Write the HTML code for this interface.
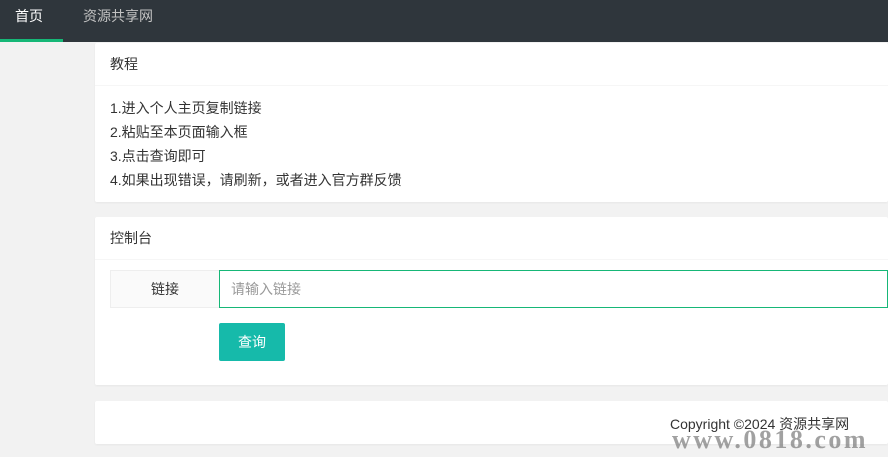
<!DOCTYPE html><html><head><meta charset="utf-8"><style>
*{margin:0;padding:0;box-sizing:border-box}
body{width:888px;height:457px;overflow:hidden;background:#f2f2f2;font-family:"Liberation Sans","Noto Sans CJK SC",sans-serif;font-size:14px;color:#333;position:relative}
.hd{position:absolute;left:0;top:0;width:888px;height:42px;background:#2f363c}
.hd .a{position:absolute;top:6px;font-size:14px}
.ul{position:absolute;left:0;top:39px;width:63px;height:3px;background:#16b777}
.card{position:absolute;left:95px;width:793px;background:#fff;border-radius:2px;box-shadow:0 1px 2px rgba(0,0,0,.05)}
.ch{height:43px;line-height:43px;padding-left:15px;border-bottom:1px solid #f6f6f6;color:#333}
.ln{position:absolute;left:15px;line-height:20px}
</style></head><body>
<div class="hd"><span class="a" style="left:15px;color:#fff">首页</span><span class="a" style="left:83px;color:#c2c2c2">资源共享网</span><div class="ul"></div></div>
<div class="card" style="top:43px;height:159px"><div class="ch">教程</div>
<div class="ln" style="top:55px">1.进入个人主页复制链接</div>
<div class="ln" style="top:79px">2.粘贴至本页面输入框</div>
<div class="ln" style="top:103px">3.点击查询即可</div>
<div class="ln" style="top:127px">4.如果出现错误，请刷新，或者进入官方群反馈</div>
</div>
<div class="card" style="top:217px;height:168px"><div class="ch">控制台</div>
<div style="position:absolute;left:15px;top:53px;width:110px;height:38px;border:1px solid #eee;background:#fafafa;line-height:36px;text-align:center">链接</div>
<div style="position:absolute;left:124px;top:53px;width:669px;height:38px;border:1px solid #16b777;line-height:36px;padding-left:11px;color:#999">请输入链接</div>
<div style="position:absolute;left:124px;top:106px;width:66px;height:38px;background:#16baaa;color:#fff;line-height:38px;text-align:center;border-radius:2px">查询</div>
</div>
<div class="card" style="top:401px;height:43px"><div style="position:absolute;left:575px;top:13px;color:#333">Copyright ©2024 资源共享网</div></div>
<div style="position:absolute;left:672px;top:425px;font-family:'Liberation Serif',serif;font-weight:bold;font-size:26px;color:rgba(130,130,130,.75);letter-spacing:2.5px">www.0818.com</div>
</body></html>
